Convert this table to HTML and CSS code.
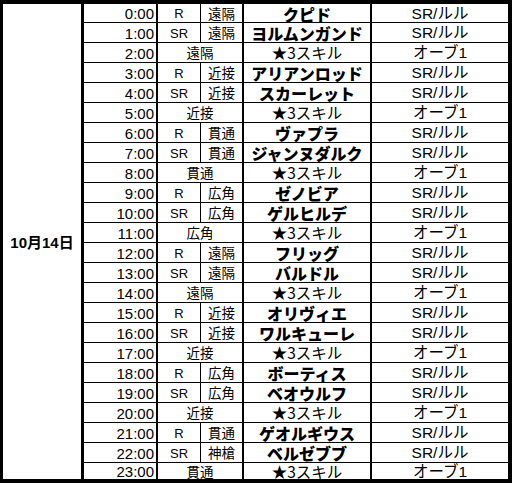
FILE: index.html
```html
<!DOCTYPE html>
<html lang="ja">
<head>
<meta charset="utf-8">
<link rel="stylesheet" href="styles.css">
</head>
<body>
<div class="sheet">
  <div class="date">10月14日</div>
  <div class="rows">
    <div class="row first"><div class="time">0:00</div><div class="rar">R</div><div class="type">遠隔</div><div class="name">クピド</div><div class="reward">SR/ルル</div></div>
    <div class="row"><div class="time">1:00</div><div class="rar">SR</div><div class="type">遠隔</div><div class="name">ヨルムンガンド</div><div class="reward">SR/ルル</div></div>
    <div class="row"><div class="time">2:00</div><div class="merged">遠隔</div><div class="skill">★3スキル</div><div class="reward">オーブ1</div></div>
    <div class="row"><div class="time">3:00</div><div class="rar">R</div><div class="type">近接</div><div class="name">アリアンロッド</div><div class="reward">SR/ルル</div></div>
    <div class="row"><div class="time">4:00</div><div class="rar">SR</div><div class="type">近接</div><div class="name">スカーレット</div><div class="reward">SR/ルル</div></div>
    <div class="row"><div class="time">5:00</div><div class="merged">近接</div><div class="skill">★3スキル</div><div class="reward">オーブ1</div></div>
    <div class="row"><div class="time">6:00</div><div class="rar">R</div><div class="type">貫通</div><div class="name">ヴァプラ</div><div class="reward">SR/ルル</div></div>
    <div class="row"><div class="time">7:00</div><div class="rar">SR</div><div class="type">貫通</div><div class="name">ジャンヌダルク</div><div class="reward">SR/ルル</div></div>
    <div class="row"><div class="time">8:00</div><div class="merged">貫通</div><div class="skill">★3スキル</div><div class="reward">オーブ1</div></div>
    <div class="row"><div class="time">9:00</div><div class="rar">R</div><div class="type">広角</div><div class="name">ゼノビア</div><div class="reward">SR/ルル</div></div>
    <div class="row"><div class="time">10:00</div><div class="rar">SR</div><div class="type">広角</div><div class="name">ゲルヒルデ</div><div class="reward">SR/ルル</div></div>
    <div class="row"><div class="time">11:00</div><div class="merged">広角</div><div class="skill">★3スキル</div><div class="reward">オーブ1</div></div>
    <div class="row"><div class="time">12:00</div><div class="rar">R</div><div class="type">遠隔</div><div class="name">フリッグ</div><div class="reward">SR/ルル</div></div>
    <div class="row"><div class="time">13:00</div><div class="rar">SR</div><div class="type">遠隔</div><div class="name">バルドル</div><div class="reward">SR/ルル</div></div>
    <div class="row"><div class="time">14:00</div><div class="merged">遠隔</div><div class="skill">★3スキル</div><div class="reward">オーブ1</div></div>
    <div class="row"><div class="time">15:00</div><div class="rar">R</div><div class="type">近接</div><div class="name">オリヴィエ</div><div class="reward">SR/ルル</div></div>
    <div class="row"><div class="time">16:00</div><div class="rar">SR</div><div class="type">近接</div><div class="name">ワルキューレ</div><div class="reward">SR/ルル</div></div>
    <div class="row"><div class="time">17:00</div><div class="merged">近接</div><div class="skill">★3スキル</div><div class="reward">オーブ1</div></div>
    <div class="row"><div class="time">18:00</div><div class="rar">R</div><div class="type">広角</div><div class="name">ボーティス</div><div class="reward">SR/ルル</div></div>
    <div class="row"><div class="time">19:00</div><div class="rar">SR</div><div class="type">広角</div><div class="name">ベオウルフ</div><div class="reward">SR/ルル</div></div>
    <div class="row"><div class="time">20:00</div><div class="merged">近接</div><div class="skill">★3スキル</div><div class="reward">オーブ1</div></div>
    <div class="row"><div class="time">21:00</div><div class="rar">R</div><div class="type">貫通</div><div class="name">ゲオルギウス</div><div class="reward">SR/ルル</div></div>
    <div class="row"><div class="time">22:00</div><div class="rar">SR</div><div class="type">神槍</div><div class="name">ベルゼブブ</div><div class="reward">SR/ルル</div></div>
    <div class="row last"><div class="time">23:00</div><div class="merged">貫通</div><div class="skill">★3スキル</div><div class="reward">オーブ1</div></div>
  </div>
</div>
</body>
</html>
```
FILE: styles.css
```css
html, body {
  margin: 0;
  padding: 0;
  background: #fff;
}
body {
  font-family: "Liberation Sans", "Noto Sans CJK JP", sans-serif;
  color: #000;
}
.sheet {
  box-sizing: border-box;
  width: 512px;
  height: 483px;
  border-style: solid;
  border-color: #000;
  border-width: 4px 4px 4px 3px;
  display: flex;
  background: #fff;
}
.date {
  box-sizing: border-box;
  width: 81px;
  border-right: 3px solid #000;
  display: flex;
  align-items: center;
  justify-content: center;
  font-family: "Liberation Sans", "Noto Sans CJK JP", sans-serif;
  font-weight: 700;
  font-size: 15px;
  line-height: 1;
  padding-top: 2px;
}
.rows {
  display: flex;
  flex-direction: column;
  width: 424px;
}
.row {
  box-sizing: border-box;
  height: 20px;
  border-top: 1px solid #000;
  display: grid;
  grid-template-columns: 74px 43px 43px 128px 136px;
}
.row.first {
  height: 18px;
  border-top: none;
}
.row.last {
  height: 17px;
}
.row > div {
  box-sizing: border-box;
  display: flex;
  align-items: center;
  justify-content: center;
  white-space: nowrap;
  line-height: 1;
  padding-top: 1px;
}
.row > .time {
  justify-content: flex-end;
  padding-right: 2px;
  border-right: 2px solid #000;
  font-family: "Liberation Sans", sans-serif;
  font-size: 15px;
}
.row > .rar {
  border-right: 1px solid #000;
  font-family: "Liberation Sans", sans-serif;
  font-size: 13px;
}
.row > .type,
.row > .merged {
  border-right: 2px solid #000;
  font-family: "Noto Sans CJK JP", sans-serif;
  font-size: 13.5px;
}
.row > .merged {
  grid-column: span 2;
}
.row > .name {
  border-right: 2px solid #000;
  font-family: "Noto Sans CJK JP", sans-serif;
  font-weight: 900;
  font-size: 16px;
}
.row > .skill {
  border-right: 2px solid #000;
  font-family: "Noto Sans CJK JP", sans-serif;
  font-size: 15.5px;
}
.row > .reward {
  font-family: "Liberation Sans", "Noto Sans CJK JP", sans-serif;
  font-size: 15.5px;
}
```
